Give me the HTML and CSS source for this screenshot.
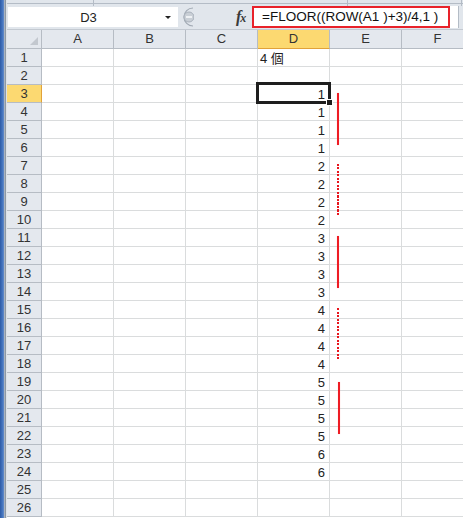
FILE: index.html
```html
<!DOCTYPE html>
<html lang="ja">
<head>
  <meta charset="UTF-8" />
  <title>FLOOR</title>
  <link rel="stylesheet" href="styles.css">
</head>
<body>

<div class="app">
  <div class="edge"></div>

  <div class="main">
    <div class="fbar">
      <div class="strip">
        <span class="seg seg-a"></span>
        <span class="seg seg-b"></span>
        <span class="seg seg-c"></span>
      </div>
      <div class="fline">
        <div class="namebox">
          <span class="ref">D3</span>
          <span class="arrow"></span>
        </div>
        <div class="knob">
          <svg width="14" height="20" viewBox="0 0 14 20">
            <path d="M13 1 A9 9 0 0 0 13 19" fill="none" stroke="#a2aab4" stroke-width="1.2"/>
            <circle cx="9" cy="10" r="5" fill="#c9cfd6" stroke="#a9b1bb"/>
            <rect x="6" y="9" width="6" height="2" fill="#eef1f4"/>
          </svg>
        </div>
        <div class="fx"><i>f</i><i class="x">x</i></div>
        <div class="formula">
          <div class="mark">=FLOOR((ROW(A1 )+3)/4,1 )</div>
        </div>
      </div>
    </div>

    <div class="sheet">
      <div class="row head">
        <div class="corner"></div>
        <div class="ch">A</div>
        <div class="ch">B</div>
        <div class="ch">C</div>
        <div class="ch on">D</div>
        <div class="ch">E</div>
        <div class="ch">F</div>
      </div>
      <div class="row"><div class="rh">1</div><div class="c"></div><div class="c"></div><div class="c"></div><div class="c txt">4 個</div><div class="c"></div><div class="c"></div></div>
      <div class="row"><div class="rh">2</div><div class="c"></div><div class="c"></div><div class="c"></div><div class="c"></div><div class="c"></div><div class="c"></div></div>
      <div class="row"><div class="rh on">3</div><div class="c"></div><div class="c"></div><div class="c"></div><div class="c num">1</div><div class="c"></div><div class="c"></div></div>
      <div class="row"><div class="rh">4</div><div class="c"></div><div class="c"></div><div class="c"></div><div class="c num">1</div><div class="c"></div><div class="c"></div></div>
      <div class="row"><div class="rh">5</div><div class="c"></div><div class="c"></div><div class="c"></div><div class="c num">1</div><div class="c"></div><div class="c"></div></div>
      <div class="row"><div class="rh">6</div><div class="c"></div><div class="c"></div><div class="c"></div><div class="c num">1</div><div class="c"></div><div class="c"></div></div>
      <div class="row"><div class="rh">7</div><div class="c"></div><div class="c"></div><div class="c"></div><div class="c num">2</div><div class="c"></div><div class="c"></div></div>
      <div class="row"><div class="rh">8</div><div class="c"></div><div class="c"></div><div class="c"></div><div class="c num">2</div><div class="c"></div><div class="c"></div></div>
      <div class="row"><div class="rh">9</div><div class="c"></div><div class="c"></div><div class="c"></div><div class="c num">2</div><div class="c"></div><div class="c"></div></div>
      <div class="row"><div class="rh">10</div><div class="c"></div><div class="c"></div><div class="c"></div><div class="c num">2</div><div class="c"></div><div class="c"></div></div>
      <div class="row"><div class="rh">11</div><div class="c"></div><div class="c"></div><div class="c"></div><div class="c num">3</div><div class="c"></div><div class="c"></div></div>
      <div class="row"><div class="rh">12</div><div class="c"></div><div class="c"></div><div class="c"></div><div class="c num">3</div><div class="c"></div><div class="c"></div></div>
      <div class="row"><div class="rh">13</div><div class="c"></div><div class="c"></div><div class="c"></div><div class="c num">3</div><div class="c"></div><div class="c"></div></div>
      <div class="row"><div class="rh">14</div><div class="c"></div><div class="c"></div><div class="c"></div><div class="c num">3</div><div class="c"></div><div class="c"></div></div>
      <div class="row"><div class="rh">15</div><div class="c"></div><div class="c"></div><div class="c"></div><div class="c num">4</div><div class="c"></div><div class="c"></div></div>
      <div class="row"><div class="rh">16</div><div class="c"></div><div class="c"></div><div class="c"></div><div class="c num">4</div><div class="c"></div><div class="c"></div></div>
      <div class="row"><div class="rh">17</div><div class="c"></div><div class="c"></div><div class="c"></div><div class="c num">4</div><div class="c"></div><div class="c"></div></div>
      <div class="row"><div class="rh">18</div><div class="c"></div><div class="c"></div><div class="c"></div><div class="c num">4</div><div class="c"></div><div class="c"></div></div>
      <div class="row"><div class="rh">19</div><div class="c"></div><div class="c"></div><div class="c"></div><div class="c num">5</div><div class="c"></div><div class="c"></div></div>
      <div class="row"><div class="rh">20</div><div class="c"></div><div class="c"></div><div class="c"></div><div class="c num">5</div><div class="c"></div><div class="c"></div></div>
      <div class="row"><div class="rh">21</div><div class="c"></div><div class="c"></div><div class="c"></div><div class="c num">5</div><div class="c"></div><div class="c"></div></div>
      <div class="row"><div class="rh">22</div><div class="c"></div><div class="c"></div><div class="c"></div><div class="c num">5</div><div class="c"></div><div class="c"></div></div>
      <div class="row"><div class="rh">23</div><div class="c"></div><div class="c"></div><div class="c"></div><div class="c num">6</div><div class="c"></div><div class="c"></div></div>
      <div class="row"><div class="rh">24</div><div class="c"></div><div class="c"></div><div class="c"></div><div class="c num">6</div><div class="c"></div><div class="c"></div></div>
      <div class="row"><div class="rh">25</div><div class="c"></div><div class="c"></div><div class="c"></div><div class="c"></div><div class="c"></div><div class="c"></div></div>
      <div class="row"><div class="rh">26</div><div class="c"></div><div class="c"></div><div class="c"></div><div class="c"></div><div class="c"></div><div class="c"></div></div>

      <!-- active cell D3 -->
      <div class="active"><span class="handle"></span></div>

      <!-- groups of four -->
      <div class="mark-line solid g1"></div>
      <div class="mark-line dotted g2"></div>
      <div class="mark-line solid g3"></div>
      <div class="mark-line dotted g4"></div>
      <div class="mark-line solid g5"></div>
    </div>
  </div>
</div>

</body>
</html>
```

FILE: styles.css
```css
body {
  margin: 0;
  width: 463px;
  height: 518px;
  overflow: hidden;
  background: #fff;
  font-family: "Liberation Sans", "Noto Sans CJK JP", sans-serif;
  color: #222;
}

.app {
  display: flex;
  height: 518px;
}

.edge {
  width: 7px;
  flex: none;
  background: linear-gradient(to right, #2d5ba6 0, #4b7bc4 3px, #6d8fc6 4px, #c9d0d9 4px, #8d98a5 5px, #8d98a5 6px, #dde2e8 6px);
}

.main {
  flex: 1;
  min-width: 0;
  overflow: hidden;
}

/* formula bar */
.fbar {
  height: 30px;
  box-sizing: border-box;
  background: #e1e6ec;
  border-bottom: 1px solid #c3c9d1;
}

.strip {
  height: 3px;
  border-bottom: 1px solid #b4bcc6;
  position: relative;
}

.seg {
  position: absolute;
  top: 0;
  width: 1px;
  height: 6px;
  background: #b4bcc6;
}

.seg-a { left: 86px; }
.seg-b { left: 340px; }
.seg-c { left: 454px; }

.fline {
  display: flex;
  align-items: center;
  height: 22px;
  margin-top: 2px;
}

.namebox {
  display: flex;
  align-items: center;
  width: 170px;
  height: 20px;
  margin-left: 1px;
  background: #fff;
  font-size: 13px;
}

.ref {
  flex: 1;
  text-align: center;
  padding-left: 4px;
}

.arrow {
  width: 0;
  height: 0;
  margin-right: 7px;
  border-left: 3px solid transparent;
  border-right: 3px solid transparent;
  border-top: 3px solid #222;
}

.knob {
  width: 14px;
  height: 20px;
  margin-left: 2px;
}

.fx {
  width: 16px;
  margin-left: 42px;
  font-family: "Liberation Serif", serif;
  font-size: 16px;
  font-weight: bold;
  color: #3a3a3a;
  letter-spacing: -1px;
}

.fx .x {
  font-size: 12px;
}

.formula {
  width: 206px;
  height: 22px;
  background: #fff;
  border-right: 1px solid #b4bcc6;
}

.mark {
  width: 198px;
  height: 22px;
  box-sizing: border-box;
  border: 2px solid #e8222a;
  padding-left: 8px;
  font-size: 13.5px;
  line-height: 18px;
  color: #111;
  white-space: pre;
}

/* sheet */
.sheet {
  position: relative;
}

.row {
  display: grid;
  grid-template-columns: 35px repeat(6, 72px);
  height: 18px;
}

.row.head {
  height: 19px;
}

.row > div {
  box-sizing: border-box;
  border-right: 1px solid #dadcdd;
  border-bottom: 1px solid #dadcdd;
  font-size: 13px;
  line-height: 17px;
  white-space: nowrap;
  overflow: hidden;
}

.row > .rh,
.row > .ch,
.row > .corner {
  background: #e4e8ee;
  border-color: #b6bcc4;
  color: #333;
  text-align: center;
}

.row > .ch {
  line-height: 18px;
}

.corner {
  position: relative;
}

.corner::after {
  content: "";
  position: absolute;
  right: 3px;
  bottom: 3px;
  border-left: 8px solid transparent;
  border-bottom: 8px solid #c3c8cf;
}

.row > .on {
  background: #fcd971;
}

.row > .ch.on {
  border-bottom-color: #e1a23a;
}

.row > .rh.on {
  border-right-color: #e1a23a;
}

.row > .num {
  text-align: right;
  padding-right: 4px;
  padding-top: 1px;
}

.row > .txt {
  padding-left: 2px;
  padding-top: 1px;
}

.active {
  position: absolute;
  left: 249px;
  top: 52px;
  width: 75px;
  height: 22px;
  box-sizing: border-box;
  border: 3px solid #1e1e1e;
}

.handle {
  position: absolute;
  right: -5px;
  bottom: -5px;
  width: 5px;
  height: 5px;
  background: #1e1e1e;
  border: 1px solid #fff;
}

.mark-line {
  position: absolute;
  left: 330px;
  width: 2px;
  height: 52px;
}

.solid {
  background: #ee1c24;
  box-shadow: 0 0 1px #f7a0a0;
}

.dotted {
  background: repeating-linear-gradient(to bottom, #e8151d 0 2px, transparent 2px 3.5px);
}

.g1 { top: 63px; }
.g2 { top: 134px; }
.g3 { top: 206px; }
.g4 { top: 278px; }
.g5 { top: 352px; left: 331px; }
```
